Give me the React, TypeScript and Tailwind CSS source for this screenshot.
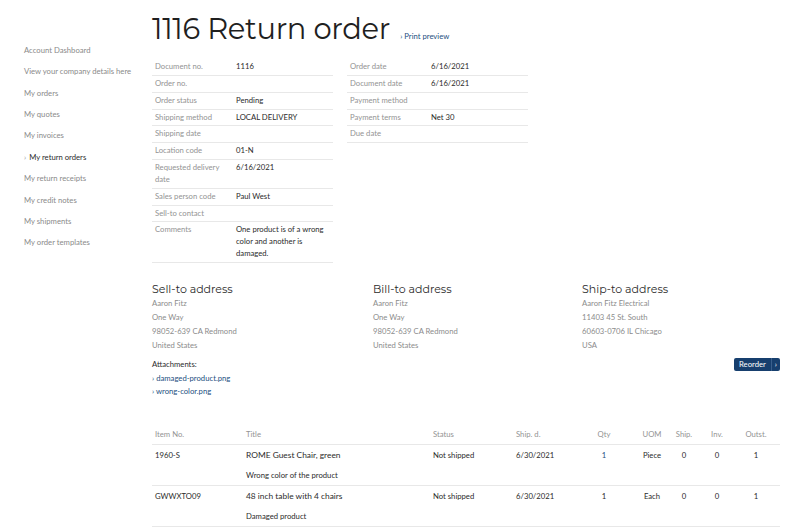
import React from "react";

const leftRows: [string, React.ReactNode][] = [
  ["Document no.", "1116"],
  ["Order no.", ""],
  ["Order status", "Pending"],
  ["Shipping method", "LOCAL DELIVERY"],
  ["Shipping date", ""],
  ["Location code", "01-N"],
  ["Requested delivery date", "6/16/2021"],
  ["Sales person code", "Paul West"],
  ["Sell-to contact", ""],
  ["Comments", "One product is of a wrong color and another is damaged."],
];

const rightRows: [string, string][] = [
  ["Order date", "6/16/2021"],
  ["Document date", "6/16/2021"],
  ["Payment method", ""],
  ["Payment terms", "Net 30"],
  ["Due date", ""],
];

const menu = [
  "Account Dashboard",
  "View your company details here",
  "My orders",
  "My quotes",
  "My invoices",
  "My return orders",
  "My return receipts",
  "My credit notes",
  "My shipments",
  "My order templates",
];

const lines = [
  {
    no: "1960-S",
    title: "ROME Guest Chair, green",
    note: "Wrong color of the product",
    status: "Not shipped",
    date: "6/30/2021",
    qty: "1",
    qtyLink: true,
    uom: "Piece",
  },
  {
    no: "GWWXTO09",
    title: "48 inch table with 4 chairs",
    note: "Damaged product",
    status: "Not shipped",
    date: "6/30/2021",
    qty: "1",
    qtyLink: false,
    uom: "Each",
  },
];

const heading = { fontFamily: "Montserrat, Inter, 'Liberation Sans', sans-serif" };

function DetailTable({ rows }: { rows: [string, React.ReactNode][] }) {
  return (
    <div className="w-[181px]">
      {rows.map(([label, value]) => (
        <div key={label} className="flex border-b border-[#e8e8e8] py-[2px] leading-[11.85px]">
          <div className="w-[84px] shrink-0 pl-[3px] pr-2 text-[#939393]">{label}</div>
          <div className="flex-1 text-[#2b2b2b]">{value}</div>
        </div>
      ))}
    </div>
  );
}

function Address({ title, lines }: { title: string; lines: string[] }) {
  return (
    <div>
      <h2 className="text-[11px] leading-[13px] text-[#2b2b2b]" style={heading}>
        {title}
      </h2>
      <div className="text-[#8c8c8c]">
        {lines.map((l) => (
          <div key={l} className="leading-[14px]">
            {l}
          </div>
        ))}
      </div>
    </div>
  );
}

export default function App() {
  return (
    <div
      className="flex min-h-[530px] w-[800px] bg-white text-[7.7px]"
      style={{ fontFamily: "Lato, 'Liberation Sans', sans-serif" }}
    >
      {/* SIDEBAR */}
      <nav className="w-[152px] shrink-0 pl-[24px] pt-[40px]">
        {menu.map((m) => (
          <div
            key={m}
            className={`flex h-[21.4px] items-center ${m === "My return orders" ? "text-[#2b2b2b]" : "text-[#8a8a8a]"}`}
          >
            {m === "My return orders" && <span className="mr-[3px] text-[#999]">›</span>}
            {m}
          </div>
        ))}
      </nav>

      {/* MAIN */}
      <main className="w-[628px] pb-4">
        <div className="flex items-end pt-[12px]">
          <h1 className="text-[29px] leading-[34px] tracking-[-0.3px] text-[#1f1f1f]" style={heading}>
            1116 Return order
          </h1>
          <a className="mb-[3px] ml-[10px] text-[#1d4f80]">› Print preview</a>
        </div>

        <div className="mt-[13px] flex gap-[14px]">
          <DetailTable rows={leftRows} />
          <DetailTable rows={rightRows} />
        </div>

        {/* ADDRESSES */}
        <div className="mt-[20px] flex">
          <div className="w-[221px]">
            <Address title="Sell-to address" lines={["Aaron Fitz", "One Way", "98052-639 CA Redmond", "United States"]} />
            <div className="mt-[6px] leading-[13.7px]">
              <div className="text-[#2b2b2b]">Attachments:</div>
              <a className="block text-[#1d4f80]">› damaged-product.png</a>
              <a className="block text-[#1d4f80]">› wrong-color.png</a>
            </div>
          </div>
          <div className="w-[209px]">
            <Address title="Bill-to address" lines={["Aaron Fitz", "One Way", "98052-639 CA Redmond", "United States"]} />
          </div>
          <div className="flex-1">
            <Address
              title="Ship-to address"
              lines={["Aaron Fitz Electrical", "11403 45 St. South", "60603-0706 IL Chicago", "USA"]}
            />
            <div className="mt-[6px] flex justify-end">
              <button className="flex h-[13px] items-stretch rounded-[2px] bg-[#173f6e] text-white">
                <span className="flex items-center px-[5px] leading-none">Reorder</span>
                <span className="flex items-center border-l border-[#3a5f8c] px-[3px] leading-none">›</span>
              </button>
            </div>
          </div>
        </div>

        {/* LINES */}
        <div className="mt-[29px]">
          <div className="flex border-b border-[#e8e8e8] pb-[4px] leading-[12px] text-[#939393]">
            <div className="w-[94px] pl-[3px]">Item No.</div>
            <div className="w-[184px]">Title</div>
            <div className="w-[83px] pl-[3px]">Status</div>
            <div className="w-[63px] pl-[3px]">Ship. d.</div>
            <div className="w-[56px] text-center">Qty</div>
            <div className="w-[40px] text-center">UOM</div>
            <div className="w-[24px] text-center">Ship.</div>
            <div className="w-[42px] text-center">Inv.</div>
            <div className="w-[36px] text-center">Outst.</div>
          </div>
          {lines.map((r) => (
            <div key={r.no} className="border-b border-[#e8e8e8] pt-[4px] pb-[4px] leading-[12px] text-[#2b2b2b]">
              <div className="flex items-center">
                <div className="w-[94px] pl-[3px]">{r.no}</div>
                <div className="w-[184px] text-[8.4px]">{r.title}</div>
                <div className="w-[83px] pl-[3px]">{r.status}</div>
                <div className="w-[63px] pl-[3px]">{r.date}</div>
                <div className={`w-[56px] text-center ${r.qtyLink ? "text-[#1d4f80]" : ""}`}>{r.qty}</div>
                <div className="w-[40px] text-center">{r.uom}</div>
                <div className="w-[24px] text-center">0</div>
                <div className="w-[42px] text-center">0</div>
                <div className="w-[36px] text-center">1</div>
              </div>
              <div className="mt-[8px] pl-[94px]">{r.note}</div>
            </div>
          ))}
        </div>
      </main>
    </div>
  );
}
